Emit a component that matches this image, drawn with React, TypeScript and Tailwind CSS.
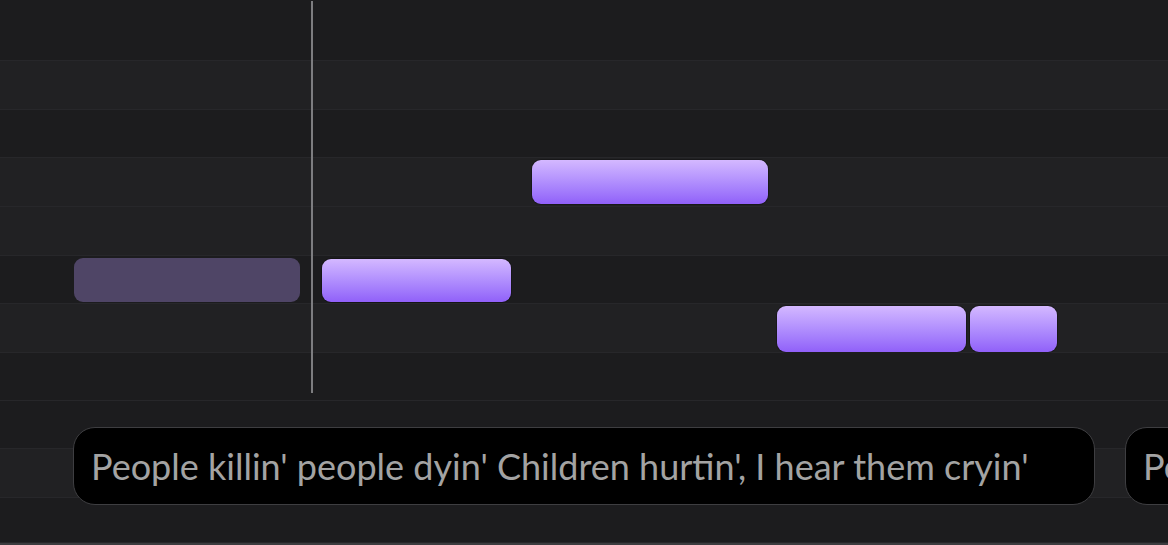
import React from "react";

const rows: { h: number; dark: boolean }[] = [
  { h: 61, dark: true },
  { h: 49, dark: false },
  { h: 48, dark: true },
  { h: 49, dark: false },
  { h: 49, dark: false },
  { h: 48, dark: true },
  { h: 49, dark: false },
  { h: 48, dark: true },
  { h: 48, dark: true },
  { h: 49, dark: false },
  { h: 45, dark: true },
];

const notes = [
  { x: 322, y: 259, w: 189, h: 43 },
  { x: 532, y: 160, w: 236, h: 44 },
  { x: 777, y: 306, w: 189, h: 46 },
  { x: 970, y: 306, w: 87, h: 46 },
];

export default function App() {
  return (
    <div
      className="relative w-[1168px] h-[545px] overflow-hidden bg-[#1c1c1e]"
      style={{ fontFamily: "Lato, 'Noto Sans', sans-serif" }}
    >
      <div className="flex flex-col">
        {rows.map((r, i) => (
          <div
            key={i}
            className={
              (r.dark ? "bg-[#1c1c1e]" : "bg-[#212123]") +
              " border-b border-[#27272a]"
            }
            style={{ height: r.h }}
          />
        ))}
        <div className="h-[2px] bg-[#3c3c3f]" />
      </div>

      {/* ghost note */}
      <div className="absolute left-[74px] top-[258px] w-[226px] h-[44px] rounded-[9px] bg-[#4f4566]" />

      {/* active notes */}
      {notes.map((n, i) => (
        <div
          key={i}
          className="absolute rounded-[9px] bg-gradient-to-b from-[#d4b8ff] to-[#9160f9] shadow-[0_0_0_1px_rgba(0,0,0,0.25)]"
          style={{ left: n.x, top: n.y, width: n.w, height: n.h }}
        />
      ))}

      {/* playhead */}
      <div className="absolute left-[311px] top-[1px] w-[2px] h-[392px] bg-[#7d7d80]" />

      {/* lyrics */}
      <div className="absolute left-[73px] top-[427px] flex gap-[30px]">
        <div className="shrink-0 w-[1022px] h-[78px] rounded-[22px] bg-black border-[1.5px] border-[#3e3e41] flex items-center pl-[17px]">
          <span className="text-[36px] text-[#a3a3a3] whitespace-nowrap leading-none">
            People killin' people dyin' Children hurtin', I hear them cryin'
          </span>
        </div>
        <div className="shrink-0 w-[1022px] h-[78px] rounded-[22px] bg-black border-[1.5px] border-[#3e3e41] flex items-center pl-[17px]">
          <span className="text-[36px] text-[#a3a3a3] whitespace-nowrap leading-none">
            People killin' people dyin'
          </span>
        </div>
      </div>
    </div>
  );
}
